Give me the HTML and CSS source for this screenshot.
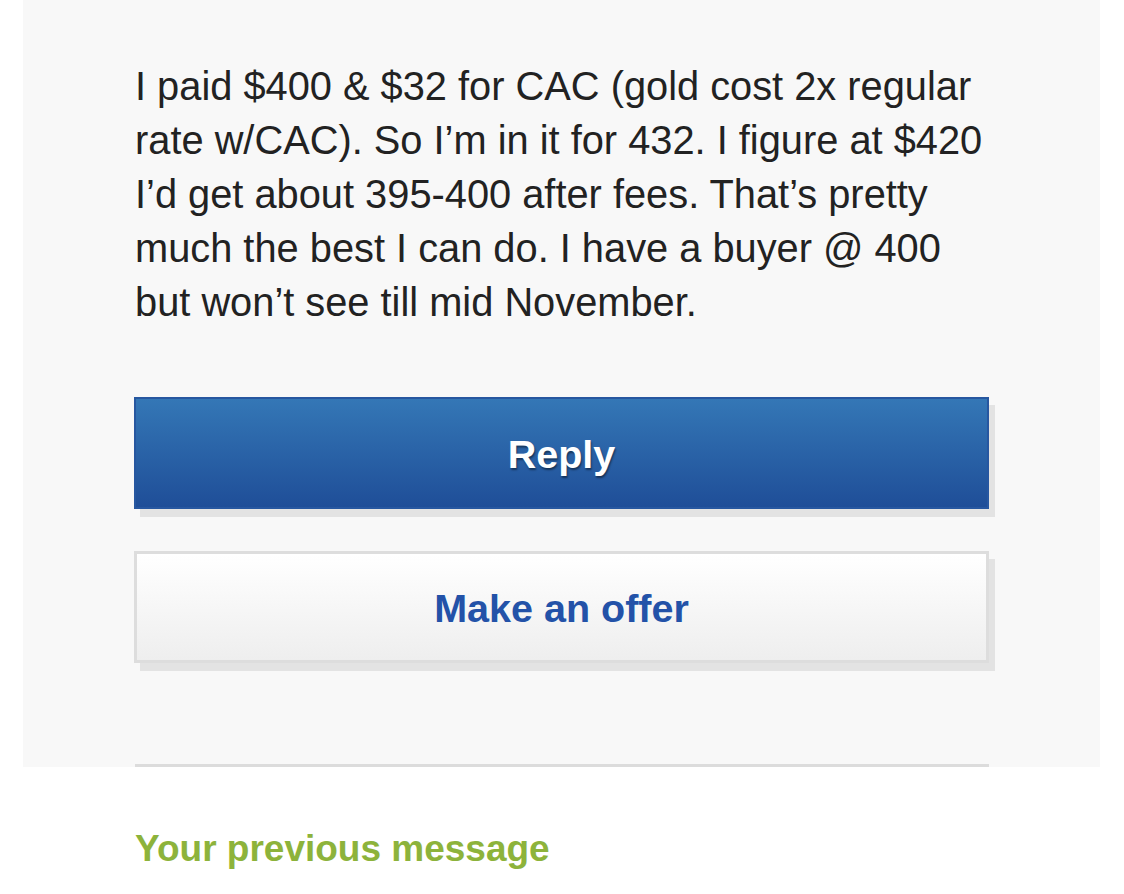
FILE: index.html
```html
<!DOCTYPE html>
<html lang="en">
<head>
  <meta charset="UTF-8" />
  <meta name="viewport" content="width=device-width, initial-scale=1.0" />
  <title>Message</title>
  <link rel="stylesheet" href="styles.css">
</head>
<body>
  <main class="panel">
    <p class="message">I paid $400 &amp; $32 for CAC (gold cost 2x regular rate w/CAC). So I’m in it for 432. I figure at $420 I’d get about 395-400 after fees. That’s pretty much the best I can do. I have a buyer @ 400 but won’t see till mid November.</p>

    <div class="actions">
      <button class="btn btn-primary">Reply</button>
      <button class="btn btn-secondary">Make an offer</button>
    </div>

    <hr class="divider">
  </main>

  <section class="previous">
    <h3>Your previous message</h3>
  </section>
</body>
</html>
```

FILE: styles.css
```css
body {
  margin: 0;
  padding: 0;
  font-family: "Liberation Sans", Arial, sans-serif;
  background: #ffffff;
  color: #222222;
}

.panel {
  margin: 0 24px 0 23px;
  padding: 59px 111px 0 111px;
  background: #f8f8f8;
}

.message {
  margin: 0 0 0 1px;
  font-size: 39.8px;
  line-height: 54px;
  color: #222;
}

.actions {
  display: flex;
  flex-direction: column;
  gap: 42px;
  margin-top: 68px;
}

.btn {
  display: block;
  width: 100%;
  height: 112px;
  padding-top: 3px;
  font-family: "Liberation Sans", Arial, sans-serif;
  font-size: 39.5px;
  font-weight: bold;
  cursor: pointer;
  box-shadow: 6px 8px 0 #e3e3e3;
}

.btn-primary {
  color: #fff;
  background: linear-gradient(to bottom, #3477b6, #1f4e98);
  border: 2px solid #2757a0;
  text-shadow: 1px 2px 2px rgba(0, 0, 0, 0.45);
}

.btn-secondary {
  color: #2352a8;
  background: linear-gradient(to bottom, #ffffff, #eeeeee);
  border: 3px solid #dddddd;
}

.divider {
  margin: 101px 0 0 1px;
  border: none;
  height: 3px;
  background: #dcdcdc;
}

.previous {
  padding: 60px 135px 0;
}

.previous h3 {
  margin: 0;
  font-size: 37px;
  line-height: 44px;
  color: #8db33b;
}
```
